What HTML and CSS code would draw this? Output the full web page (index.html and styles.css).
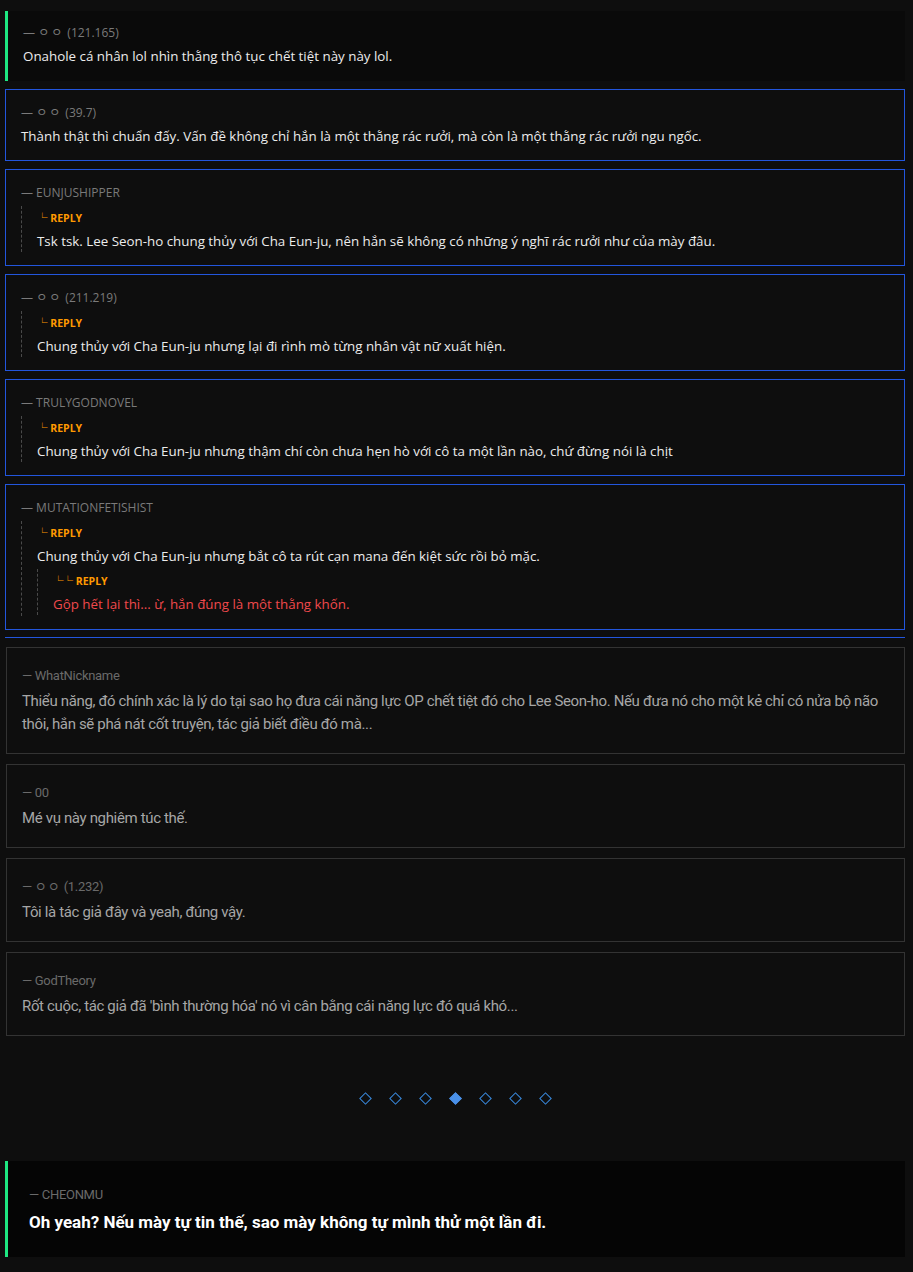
FILE: index.html
```html
<!DOCTYPE html>
<html lang="vi">
<head>
<meta charset="utf-8">
<title>Comments</title>
<link rel="stylesheet" href="styles.css">
</head>
<body>
<main class="page">
  <section class="thread">
    <article class="card card-lead">
      <div class="meta">— <span class="anon">ㅇㅇ</span> (121.165)</div>
      <p class="text">Onahole cá nhân lol nhìn thằng thô tục chết tiệt này này lol.</p>
    </article>

    <article class="card card-blue">
      <div class="meta">— <span class="anon">ㅇㅇ</span> (39.7)</div>
      <p class="text">Thành thật thì chuẩn đấy. Vấn đề không chỉ hắn là một thằng rác rưởi, mà còn là một thằng rác rưởi ngu ngốc.</p>
    </article>

    <article class="card card-blue">
      <div class="meta">— EUNJUSHIPPER</div>
      <div class="reply">
        <div class="reply-label"><span class="corner">└</span> REPLY</div>
        <p class="text">Tsk tsk. Lee Seon-ho chung thủy với Cha Eun-ju, nên hắn sẽ không có những ý nghĩ rác rưởi như của mày đâu.</p>
      </div>
    </article>

    <article class="card card-blue">
      <div class="meta">— <span class="anon">ㅇㅇ</span> (211.219)</div>
      <div class="reply">
        <div class="reply-label"><span class="corner">└</span> REPLY</div>
        <p class="text">Chung thủy với Cha Eun-ju nhưng lại đi rình mò từng nhân vật nữ xuất hiện.</p>
      </div>
    </article>

    <article class="card card-blue">
      <div class="meta">— TRULYGODNOVEL</div>
      <div class="reply">
        <div class="reply-label"><span class="corner">└</span> REPLY</div>
        <p class="text">Chung thủy với Cha Eun-ju nhưng thậm chí còn chưa hẹn hò với cô ta một lần nào, chứ đừng nói là chịt</p>
      </div>
    </article>

    <article class="card card-blue">
      <div class="meta">— MUTATIONFETISHIST</div>
      <div class="reply">
        <div class="reply-label"><span class="corner">└</span> REPLY</div>
        <p class="text">Chung thủy với Cha Eun-ju nhưng bắt cô ta rút cạn mana đến kiệt sức rồi bỏ mặc.</p>
        <div class="reply reply-nested">
          <div class="reply-label"><span class="corner">└</span><span class="corner corner-2">└</span> REPLY</div>
          <p class="text text-red">Gộp hết lại thì... ừ, hắn đúng là một thằng khốn.</p>
        </div>
      </div>
    </article>
  </section>

  <div class="divider" role="separator"></div>

  <section class="thread-plain">
    <article class="pcard">
      <div class="pmeta">— WhatNickname</div>
      <p class="ptext">Thiểu năng, đó chính xác là lý do tại sao họ đưa cái năng lực OP chết tiệt đó cho Lee Seon-ho. Nếu đưa nó cho một kẻ chỉ có nửa bộ não thôi, hắn sẽ phá nát cốt truyện, tác giả biết điều đó mà...</p>
    </article>
    <article class="pcard">
      <div class="pmeta">— 00</div>
      <p class="ptext">Mé vụ này nghiêm túc thế.</p>
    </article>
    <article class="pcard">
      <div class="pmeta">— <span class="anon-s">ㅇㅇ</span> (1.232)</div>
      <p class="ptext">Tôi là tác giả đây và yeah, đúng vậy.</p>
    </article>
    <article class="pcard">
      <div class="pmeta">— GodTheory</div>
      <p class="ptext">Rốt cuộc, tác giả đã 'bình thường hóa' nó vì cân bằng cái năng lực đó quá khó...</p>
    </article>
  </section>

  <nav class="pager" aria-label="pages">
    <span class="dot"></span>
    <span class="dot"></span>
    <span class="dot"></span>
    <span class="dot dot-on"></span>
    <span class="dot"></span>
    <span class="dot"></span>
    <span class="dot"></span>
  </nav>

  <article class="final">
    <div class="fmeta">— CHEONMU</div>
    <p class="ftext">Oh yeah? Nếu mày tự tin thế, sao mày không tự mình thử một lần đi.</p>
  </article>
</main>
</body>
</html>
```

FILE: styles.css
```css
* { box-sizing: border-box; }

html, body {
  margin: 0;
  padding: 0;
  background: #0e0e0e;
}

body {
  font-family: "Open Sans", "Noto Sans", "Noto Sans CJK KR", sans-serif;
  color: #e2e2e2;
}

.page {
  padding: 11px 8px 15px 5px;
}

.thread {
  display: flex;
  flex-direction: column;
  gap: 8px;
}

.card {
  padding: 15px 15px 14px;
}

.card-lead {
  background: #0a0a0a;
  border-left: 3px solid #1ee882;
  padding: 14px 15px 15px 15px;
}

.card-blue {
  background: #0e0e0e;
  border: 1px solid #2356dd;
}

.meta {
  font-size: 12px;
  line-height: 16px;
  color: #7a7a7a;
  margin-bottom: 5px;
}

.anon {
  letter-spacing: 2px;
}

.anon-s {
  letter-spacing: 1px;
}

.text {
  margin: 0;
  font-size: 13.35px;
  line-height: 20px;
  color: #ececec;
}

.text-red { color: #f0494c; }

.reply {
  border-left: 1px dashed #4a4a4a;
  padding: 4px 0 1px 15px;
}

.card-blue > .reply:last-child {
  margin-bottom: -1px;
}

.reply-nested {
  margin-top: 3px;
}

.reply-label {
  font-size: 10.5px;
  line-height: 16px;
  font-weight: 700;
  color: #ff9a00;
  margin-bottom: 5px;
}

.corner {
  font-weight: 700;
}

.corner-2 {
  margin-left: -1px;
}

.divider {
  height: 1px;
  background-color: #2356dd;
  margin: 7px 0 9px;
}

.thread-plain {
  display: flex;
  flex-direction: column;
  gap: 10px;
  padding-left: 1px;
}

.pcard {
  border: 1px solid #333333;
  background: #0e0e0e;
  padding: 19px 15px 17px;
}

.pmeta {
  font-family: "Roboto", "Noto Sans CJK KR", sans-serif;
  font-size: 13px;
  line-height: 18px;
  letter-spacing: -0.3px;
  color: #6a6a6a;
  margin-bottom: 5px;
}

.ptext {
  margin: 0;
  font-family: "Roboto", "Noto Sans CJK KR", sans-serif;
  font-size: 15px;
  line-height: 23px;
  letter-spacing: -0.35px;
  color: #a6a6a6;
}

.pager {
  display: flex;
  justify-content: center;
  gap: 18px;
  padding: 56px 0 57px;
}

.dot {
  width: 9px;
  height: 9px;
  border: 1.5px solid #3a8be0;
  transform: rotate(45deg);
  margin: 1.5px;
}

.dot-on {
  background: #4a90e8;
  border-color: #4a90e8;
}

.final {
  background: #050505;
  border-left: 3px solid #1ee882;
  padding: 25px 21px 24px;
}

.fmeta {
  font-family: "Roboto", "Noto Sans CJK KR", sans-serif;
  font-size: 13px;
  line-height: 18px;
  letter-spacing: -0.3px;
  color: #6a6a6a;
  margin-bottom: 7px;
}

.ftext {
  margin: 0;
  font-family: "Roboto", "Noto Sans CJK KR", sans-serif;
  font-size: 17px;
  line-height: 22px;
  font-weight: 700;
  color: #ffffff;
}
```
